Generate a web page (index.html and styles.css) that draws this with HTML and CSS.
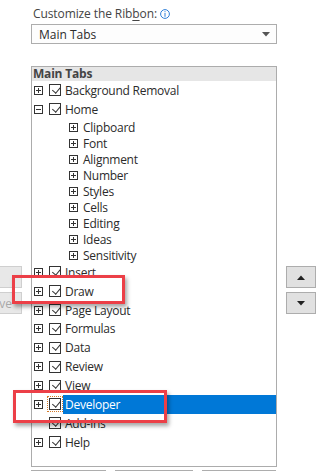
FILE: index.html
```html
<!DOCTYPE html>
<html>
<head>
<meta charset="utf-8">
<link rel="stylesheet" href="styles.css">
</head>
<body>
<div class="page">
  <div class="label">Customize the Rib<u>b</u>on:<svg class="info" width="10" height="10" viewBox="0 0 10 10"><circle cx="5" cy="5" r="4.4" fill="none" stroke="#2f7fd8" stroke-width="1"/><rect x="4.5" y="2.2" width="1" height="1" fill="#2f7fd8"/><rect x="4.5" y="4" width="1" height="3.8" fill="#2f7fd8"/></svg></div>
  <div class="select"><span>Main Tabs</span><svg width="8" height="5" viewBox="0 0 8 5"><path d="M0 0H8L4 4.5Z" fill="#555"/></svg></div>

  <div class="main">
    <div class="left-col">
      <div class="btn wide add">Add &gt;&gt;</div>
      <div class="btn wide remove">&lt;&lt; Remove</div>
    </div>
    <div class="list">
      <div class="list-head">Main Tabs</div>
      <div class="row top"><span class="exp plus"></span><span class="chk"></span><span class="txt">Background Removal</span></div>
      <div class="row top"><span class="exp minus"></span><span class="chk"></span><span class="txt">Home</span></div>
      <div class="row child"><span class="exp plus"></span><span class="txt">Clipboard</span></div>
      <div class="row child"><span class="exp plus"></span><span class="txt">Font</span></div>
      <div class="row child"><span class="exp plus"></span><span class="txt">Alignment</span></div>
      <div class="row child"><span class="exp plus"></span><span class="txt">Number</span></div>
      <div class="row child"><span class="exp plus"></span><span class="txt">Styles</span></div>
      <div class="row child"><span class="exp plus"></span><span class="txt">Cells</span></div>
      <div class="row child"><span class="exp plus"></span><span class="txt">Editing</span></div>
      <div class="row child"><span class="exp plus"></span><span class="txt">Ideas</span></div>
      <div class="row child"><span class="exp plus"></span><span class="txt">Sensitivity</span></div>
      <div class="row top"><span class="exp plus"></span><span class="chk"></span><span class="txt">Insert</span></div>
      <div class="row top"><span class="exp plus"></span><span class="chk"></span><span class="txt">Draw</span></div>
      <div class="row top"><span class="exp plus"></span><span class="chk"></span><span class="txt">Page Layout</span></div>
      <div class="row top"><span class="exp plus"></span><span class="chk"></span><span class="txt">Formulas</span></div>
      <div class="row top"><span class="exp plus"></span><span class="chk"></span><span class="txt">Data</span></div>
      <div class="row top"><span class="exp plus"></span><span class="chk"></span><span class="txt">Review</span></div>
      <div class="row top"><span class="exp plus"></span><span class="chk"></span><span class="txt">View</span></div>
      <div class="row top selected"><span class="exp plus"></span><span class="chk focus"></span><span class="txt">Developer</span></div>
      <div class="row top"><span class="exp none"></span><span class="chk"></span><span class="txt">Add-ins</span></div>
      <div class="row top"><span class="exp plus"></span><span class="chk"></span><span class="txt">Help</span></div>
    </div>
    <div class="right-col">
      <div class="btn arrow"><svg width="8" height="5" viewBox="0 0 8 5"><path d="M0 5H8L4 0.5Z" fill="#222"/></svg></div>
      <div class="btn arrow"><svg width="8" height="5" viewBox="0 0 8 5"><path d="M0 0H8L4 4.5Z" fill="#222"/></svg></div>
    </div>
  </div>

  <div class="bottom">
    <div class="btn b1"></div>
    <div class="btn b2"></div>
    <div class="btn b3"></div>
  </div>

  <div class="mark mark-draw"></div>
  <div class="mark mark-dev"></div>
</div>
</body>
</html>
```

FILE: styles.css
```css
html, body {
  margin: 0;
  padding: 0;
  background: #fff;
}
body {
  font-family: "Open Sans", "Noto Sans", "DejaVu Sans", sans-serif;
  font-size: 12px;
  color: #2b2b2b;
  overflow: hidden;
  width: 319px;
  height: 471px;
}
.page {
  position: relative;
  padding-top: 6px;
}
.label {
  margin-left: 33px;
  height: 16px;
  line-height: 16px;
  color: #444;
  display: flex;
  align-items: center;
  letter-spacing: -0.1px;
}
.label u {
  text-underline-offset: 2px;
}
.info {
  margin-left: 3px;
  margin-top: -1px;
}
.select {
  margin: 2px 0 0 31px;
  width: 246px;
  height: 20px;
  box-sizing: border-box;
  border: 1px solid #adadad;
  background: #fdfdfd;
  display: flex;
  align-items: center;
  justify-content: space-between;
  padding: 0 6px 0 7px;
}
.main {
  display: flex;
  margin-top: 22px;
}
.left-col {
  width: 31px;
  flex: none;
  display: flex;
  flex-direction: column;
  align-items: flex-end;
  padding-top: 200px;
  gap: 4px;
}
.btn {
  box-sizing: border-box;
  border: 1px solid #adadad;
  background: #e1e1e1;
  flex: none;
}
.btn.wide {
  width: 90px;
  height: 22px;
  margin-right: 9px;
  background: #e8e8e8;
  border-color: #cfcfcf;
  color: #a8a8a8;
  display: flex;
  align-items: center;
  white-space: nowrap;
}
.btn.add {
  justify-content: center;
}
.btn.remove {
  justify-content: flex-end;
  padding-right: 9px;
}
.list {
  width: 246px;
  height: 401px;
  box-sizing: border-box;
  border: 1px solid #acacac;
  flex: none;
  overflow: hidden;
}
.list-head {
  height: 14px;
  line-height: 14px;
  background: #e6e6e6;
  font-weight: bold;
  padding-left: 1px;
  color: #444;
  letter-spacing: -0.2px;
}
.row {
  display: flex;
  align-items: center;
  white-space: nowrap;
}
.row.top {
  height: 18.9px;
  padding-left: 2px;
}
.row.child {
  height: 16px;
  padding-left: 37px;
  padding-top: 2px;
  box-sizing: border-box;
}
.exp {
  width: 9px;
  height: 9px;
  box-sizing: border-box;
  border: 1px solid #333;
  position: relative;
  flex: none;
}
.exp.plus::before,
.exp.minus::before {
  content: "";
  position: absolute;
  left: 1px;
  top: 3px;
  width: 5px;
  height: 1px;
  background: #333;
}
.exp.plus::after {
  content: "";
  position: absolute;
  left: 3px;
  top: 1px;
  width: 1px;
  height: 5px;
  background: #333;
}
.exp.none {
  visibility: hidden;
}
.chk {
  width: 12px;
  height: 12px;
  box-sizing: border-box;
  border: 1px solid #333;
  margin-left: 6px;
  flex: none;
  position: relative;
  background: #fff;
}
.chk::after {
  content: "";
  position: absolute;
  left: 3.5px;
  top: -0.5px;
  width: 3.5px;
  height: 7px;
  border-right: 1.2px solid #333;
  border-bottom: 1.2px solid #333;
  transform: rotate(40deg);
}
.chk.focus {
  outline: 1px dotted #d47a2a;
  outline-offset: 1px;
}
.txt {
  margin-left: 4px;
  letter-spacing: -0.25px;
}
.row.child .txt {
  margin-left: 5px;
}
.row.selected .txt {
  flex: 1;
  align-self: stretch;
  background: #0078d7;
  color: #fff;
  margin-left: 2px;
  padding-left: 2px;
  display: flex;
  align-items: center;
}
.right-col {
  padding-left: 9px;
  padding-top: 200px;
  display: flex;
  flex-direction: column;
  gap: 4px;
}
.btn.arrow {
  width: 30px;
  height: 22px;
  display: flex;
  align-items: center;
  justify-content: center;
}
.bottom {
  display: flex;
  margin: 3px 0 0 31px;
  gap: 9px;
}
.b1 { width: 75px; height: 23px; }
.b2 { width: 78px; height: 23px; }
.b3 { width: 74px; height: 23px; }
.mark {
  position: absolute;
  border: 3px solid #ec3f47;
  box-shadow: 2px 3px 4px rgba(0, 0, 0, 0.35);
  box-sizing: border-box;
}
.mark-draw {
  left: 12px;
  top: 275px;
  width: 113px;
  height: 29px;
}
.mark-dev {
  left: 13px;
  top: 390px;
  width: 154px;
  height: 33px;
}
```
